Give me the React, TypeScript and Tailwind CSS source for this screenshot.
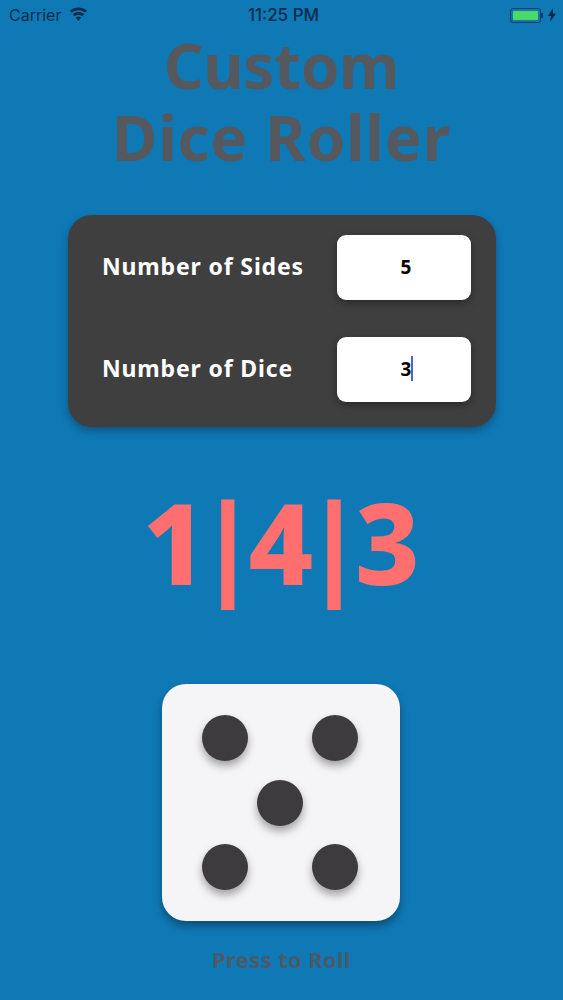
const uiFont = "font-['Noto_Sans','Open_Sans',sans-serif]";

function StatusBar() {
  return (
    <div className="grid h-[30px] grid-cols-3 items-center pl-[9px] pr-[7px] text-[#0a2c4c] font-['Inter','Liberation_Sans',sans-serif] text-[16px]">
      <div className="flex items-center gap-[8px]">
        <span>Carrier</span>
        <svg viewBox="0 0 18 14" className="-mt-[3px] h-[14px] w-[19px]" fill="#0a2c4c">
          <path d="M9 14 6.2 10.6a4.4 4.4 0 0 1 5.6 0z" />
          <path d="M5.1 9.3 3.3 7.1a8.9 8.9 0 0 1 11.4 0l-1.8 2.2a6.1 6.1 0 0 0-7.800 0z" />
          <path d="M2.2 5.8.4 3.6a13.4 13.4 0 0 1 17.2 0l-1.8 2.2a10.6 10.6 0 0 0-13.6 0z" />
        </svg>
      </div>
      <div className="pl-[2px] pt-[1px] text-center text-[17px] font-medium">11:25 PM</div>
      <div className="flex items-center justify-end gap-[5px]">
        <div className="flex items-center">
          <div className="h-[15px] w-[31px] rounded-[3px] border border-[#0a3c66] p-[2px]">
            <div className="h-full w-full rounded-[1px] bg-[#4cd964]" />
          </div>
          <div className="h-[5px] w-[1.5px] bg-[#0a3c66]" />
        </div>
        <svg viewBox="0 0 8 14" className="h-[14px] w-[8px]" fill="#0a2c4c">
          <path d="M5 0 0 8h3l-1 6 6-8.500H5z" />
        </svg>
      </div>
    </div>
  );
}

function Field({ label, value, caret }: { label: string; value: string; caret?: boolean }) {
  return (
    <div className="flex h-[65px] items-center justify-between">
      <span className="pb-[2px] text-[23px] font-bold tracking-[0.85px] text-white">{label}</span>
      <div className="flex h-[65px] w-[134px] items-center justify-center rounded-[9px] bg-white pl-[4px] text-[19px] font-bold text-black shadow-[0_3px_8px_rgba(0,0,0,0.35)]">
        <span className="relative">
          {value}
          {caret && <span className="absolute left-full top-[1px] h-[25px] w-[2px] bg-[#4a63d8]" />}
        </span>
      </div>
    </div>
  );
}

function Pip() {
  return <div className="h-[46px] w-[46px] rounded-full bg-[#3d3b3d] shadow-[0_5px_8px_rgba(0,0,0,0.35)]" />;
}

export default function App() {
  return (
    <div className={`h-[1000px] w-full overflow-hidden bg-[#0f79b6] ${uiFont}`}>
      <StatusBar />
      <h1 className="-mt-[1px] text-center text-[62px] font-bold leading-[72px] text-[#55585c]">
        <span className="block tracking-[-0.3px]">Custom</span>
        <span className="block tracking-[0.8px]">Dice Roller</span>
      </h1>
      <div className="ml-[68px] mr-[67px] mt-[42px] flex h-[212px] flex-col gap-[37px] rounded-[24px] bg-[#3f3f40] pl-[34px] pr-[25px] pt-[20px] shadow-[0_4px_8px_rgba(0,0,0,0.3)]">
        <Field label="Number of Sides" value="5" />
        <Field label="Number of Dice" value="3" caret />
      </div>
      <div className="mt-[33px] pr-[10px] text-center text-[112px] font-extrabold leading-[164px] tracking-[-9px] text-[#ff6f6f]">
        1|4|3
      </div>
      <div className="ml-[162px] mt-[60px] flex h-[237px] w-[238px] flex-col gap-[18.5px] rounded-[24px] bg-[#f5f5f7] pl-[40px] pr-[42px] pt-[31px] shadow-[0_5px_9px_rgba(0,0,0,0.35)]">
        <div className="flex justify-between">
          <Pip />
          <Pip />
        </div>
        <div className="flex justify-center">
          <Pip />
        </div>
        <div className="flex justify-between">
          <Pip />
          <Pip />
        </div>
      </div>
      <div className="mt-[23px] text-center text-[22px] font-bold leading-[30px] tracking-[0.35px] text-[#4a5a68]">Press to Roll</div>
    </div>
  );
}
